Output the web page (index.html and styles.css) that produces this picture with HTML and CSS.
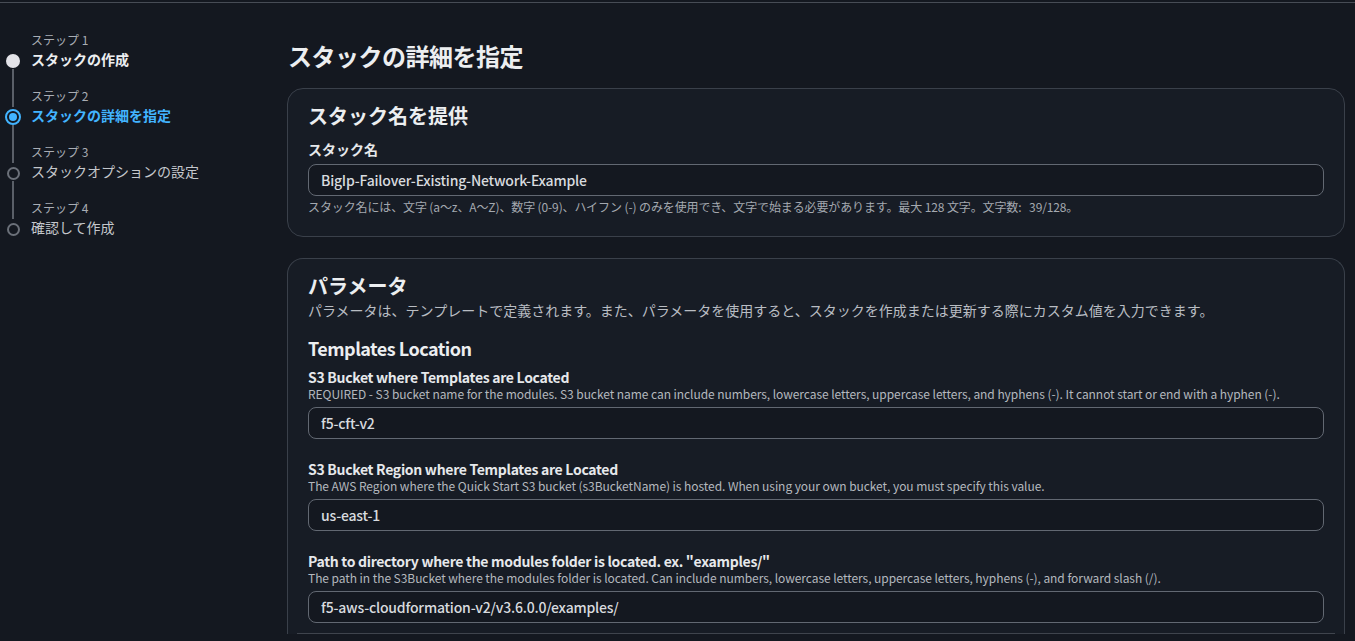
FILE: index.html
```html
<!DOCTYPE html>
<html lang="ja">
<head>
<meta charset="utf-8">
<title>スタックの詳細を指定</title>
<link rel="stylesheet" href="styles.css">
</head>
<body>
<div class="topbar"></div>
<div class="layout">
  <nav class="steps">
    <div class="step done">
      <div class="mk mk-top"></div>
      <div class="step-label">ステップ 1</div>
      <div class="mk mk-main"><span class="dot"><span class="dot-fill"></span></span><span class="line"></span></div>
      <div class="step-title">スタックの作成</div>
    </div>
    <div class="step current">
      <div class="mk mk-top"><span class="line"></span></div>
      <div class="step-label">ステップ 2</div>
      <div class="mk mk-main"><span class="dot"><span class="dot-fill"></span></span><span class="line"></span></div>
      <div class="step-title">スタックの詳細を指定</div>
    </div>
    <div class="step todo">
      <div class="mk mk-top"><span class="line"></span></div>
      <div class="step-label">ステップ 3</div>
      <div class="mk mk-main"><span class="dot"><span class="dot-fill"></span></span><span class="line"></span></div>
      <div class="step-title">スタックオプションの設定</div>
    </div>
    <div class="step todo last">
      <div class="mk mk-top"><span class="line"></span></div>
      <div class="step-label">ステップ 4</div>
      <div class="mk mk-main"><span class="dot"><span class="dot-fill"></span></span></div>
      <div class="step-title">確認して作成</div>
    </div>
  </nav>
  <main class="main">
    <h1 class="page-title">スタックの詳細を指定</h1>
    <section class="card card-name">
      <h2 class="card-title">スタック名を提供</h2>
      <div class="field-label field-label-first">スタック名</div>
      <div class="input">BigIp-Failover-Existing-Network-Example</div>
      <div class="hint">スタック名には、文字 (a～z、A～Z)、数字 (0-9)、ハイフン (-) のみを使用でき、文字で始まる必要があります。最大 128 文字。文字数:&nbsp;&nbsp; 39/128。</div>
    </section>
    <section class="card card-params">
      <h2 class="card-title">パラメータ</h2>
      <p class="card-desc">パラメータは、テンプレートで定義されます。また、パラメータを使用すると、スタックを作成または更新する際にカスタム値を入力できます。</p>
      <h3 class="group-title">Templates Location</h3>
      <div class="field">
        <div class="field-label">S3 Bucket where Templates are Located</div>
        <div class="field-desc">REQUIRED - S3 bucket name for the modules. S3 bucket name can include numbers, lowercase letters, uppercase letters, and hyphens (-). It cannot start or end with a hyphen (-).</div>
        <div class="input">f5-cft-v2</div>
      </div>
      <div class="field">
        <div class="field-label">S3 Bucket Region where Templates are Located</div>
        <div class="field-desc">The AWS Region where the Quick Start S3 bucket (s3BucketName) is hosted. When using your own bucket, you must specify this value.</div>
        <div class="input">us-east-1</div>
      </div>
      <div class="field">
        <div class="field-label">Path to directory where the modules folder is located. ex. "examples/"</div>
        <div class="field-desc">The path in the S3Bucket where the modules folder is located. Can include numbers, lowercase letters, uppercase letters, hyphens (-), and forward slash (/).</div>
        <div class="input">f5-aws-cloudformation-v2/v3.6.0.0/examples/</div>
      </div>
      <div class="divider"></div>
    </section>
  </main>
</div>
</body>
</html>
```
FILE: styles.css
```css
* { box-sizing: border-box; }
html, body {
  margin: 0;
  padding: 0;
  background: #141820;
  color: #e6e8eb;
  font-family: "Noto Sans CJK JP", "Noto Sans", sans-serif;
  height: 641px;
  overflow: hidden;
}
.topbar {
  height: 3px;
  border-bottom: 1px solid #474c55;
}
.layout {
  display: flex;
}
.steps {
  width: 287px;
  flex: none;
  padding-top: 28px;
}
.step {
  display: grid;
  grid-template-columns: 26px 1fr;
  grid-template-rows: 18px 1fr;
  column-gap: 5px;
  height: 56px;
}
.step.last { height: 40px; }
.mk {
  display: flex;
  flex-direction: column;
  align-items: center;
}
.mk-main { padding-top: 4px; }
.line {
  display: block;
  width: 2px;
  flex: 1;
  background: #5a5f68;
}
.mk-top .line { margin-bottom: -2px; }
.dot {
  width: 16px;
  height: 16px;
  flex: none;
  display: flex;
  align-items: center;
  justify-content: center;
}
.step-label {
  font-size: 12px;
  line-height: 18px;
  color: #a9adb4;
}
.step-title {
  font-size: 14px;
  line-height: 20px;
  color: #c4c7cc;
}
.done .step-title { color: #eceef0; font-weight: 700; }
.current .step-title { color: #42b4ff; font-weight: 700; }
.done .dot-fill {
  width: 14px;
  height: 14px;
  border-radius: 50%;
  background: #e3e3e8;
}
.current .dot {
  border: 2px solid #42b4ff;
  border-radius: 50%;
}
.current .dot-fill {
  width: 8px;
  height: 8px;
  border-radius: 50%;
  background: #42b4ff;
}
.todo .dot-fill {
  width: 13px;
  height: 13px;
  border-radius: 50%;
  border: 2px solid #6b7079;
}
.main {
  flex: 1;
  padding: 37px 10px 0 0;
  min-width: 0;
}
.page-title {
  margin: 0;
  font-size: 24px;
  line-height: 32px;
  font-weight: 700;
  color: #eceef0;
  letter-spacing: -0.5px;
  padding-left: 1px;
}
.card {
  background: #171c25;
  border: 1px solid #3a404a;
  border-radius: 16px;
  padding: 13px 20px 21px;
}
.card-name { margin-top: 16px; }
.card-params { margin-top: 21px; padding-bottom: 0; border-bottom: none; border-radius: 16px 16px 0 0; }
.card-title {
  margin: 0;
  font-size: 20px;
  line-height: 28px;
  font-weight: 700;
  color: #eceef0;
}
.card-desc {
  margin: 0;
  font-size: 14px;
  line-height: 20px;
  color: #b9bdc3;
}
.group-title {
  margin: 16px 0 0;
  font-size: 18px;
  line-height: 24px;
  font-weight: 700;
  color: #eceef0;
  letter-spacing: -0.5px;
}
.field { margin-top: 21px; }
.group-title + .field { margin-top: 8px; }
.field-label {
  font-size: 14px;
  line-height: 18px;
  font-weight: 700;
  color: #e6e8eb;
  letter-spacing: -0.3px;
}
.field-label-first {
  margin-top: 9px;
  line-height: 20px;
  margin-bottom: 5px;
  letter-spacing: 0;
}
.field-desc {
  font-size: 12px;
  line-height: 16px;
  color: #b4b8be;
  margin-bottom: 5px;
  letter-spacing: -0.06px;
}
.input {
  height: 32px;
  border: 1px solid #626872;
  border-radius: 8px;
  background: #141820;
  padding: 0 12px;
  font-size: 14px;
  line-height: 30px;
  color: #d8dbdf;
  font-weight: 500;
  letter-spacing: -0.2px;
  white-space: nowrap;
  overflow: hidden;
}
.hint {
  margin-top: 3px;
  font-size: 12px;
  line-height: 16px;
  color: #a4a9b0;
  letter-spacing: -0.12px;
}
.divider {
  height: 1px;
  background: #3f444d;
  margin: 10px -11px 0 -11px;
}
```
